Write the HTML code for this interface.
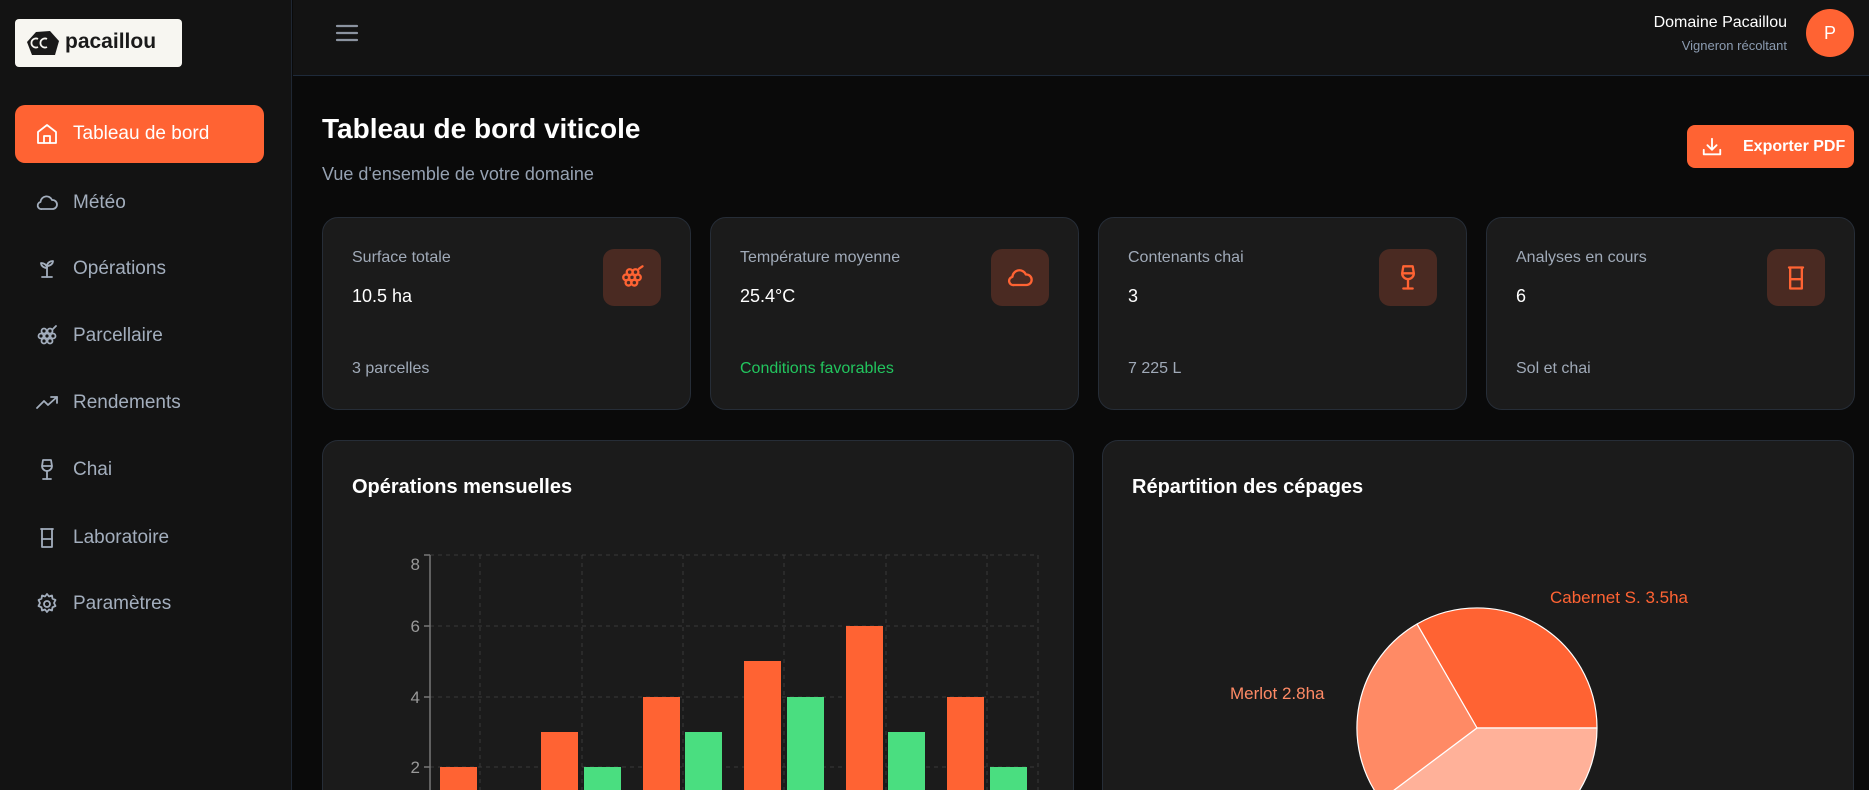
<!DOCTYPE html>
<html style="width:1869px;height:790px;overflow:hidden"><head><meta charset="utf-8"><style>
*{box-sizing:border-box;margin:0;padding:0}
body{width:1869px;height:790px;overflow:hidden;background:#0a0a0a;font-family:"Liberation Sans",sans-serif;position:relative;color:#fff}
.abs{position:absolute}
.side{left:0;top:0;width:292px;height:790px;background:#131313;border-right:1px solid #1f2733}
.logo{left:15px;top:19px;width:167px;height:48px;background:#f7f6f1;border-radius:4px}
.nav{left:15px;width:249px;height:58px;border-radius:10px;display:flex;align-items:center;padding-left:20px;font-size:19px;color:#a3aebd}
.nav svg{width:24px;height:24px;margin-right:14px;fill:none;stroke:#a3aebd;stroke-width:1.8;stroke-linecap:round;stroke-linejoin:round}
.nav.act{background:#ff6333;color:#fff}
.nav.act svg{stroke:#fff}
.hdr{left:293px;top:0;width:1576px;height:76px;background:#131313;border-bottom:1px solid #1e2a3a}
.card{background:#1b1b1b;border:1px solid #262d37;border-radius:16px}
.lbl{font-size:16px;color:#a0aab8}
.val{font-size:18px;color:#fff}
.ib{width:58px;height:57px;background:#4a2a22;border-radius:11px;display:flex;align-items:center;justify-content:center}
.ib svg{width:28px;height:28px;fill:none;stroke:#ff6333;stroke-width:2;stroke-linecap:round;stroke-linejoin:round}
</style></head><body>
<div class="abs side"></div>
<div class="abs logo">
<svg class="abs" style="left:10px;top:10px" width="36" height="28" viewBox="0 0 36 28"><path d="M2 13 L11 3 L25 2 L34 12 L30 26 L7 26 Z" fill="#1a1a1a"/><path d="M13 10 a4.5 4.5 0 1 0 0 8" stroke="#f7f6f1" stroke-width="1.8" fill="none"/><path d="M22 10 a4.5 4.5 0 1 0 0 8" stroke="#f7f6f1" stroke-width="1.8" fill="none"/></svg>
<div class="abs" style="left:50px;top:11px;font-size:21px;font-weight:bold;color:#1a1a1a">pacaillou</div>
</div>
<div class="abs nav act" style="top:105px"><svg viewBox="0 0 24 24"><path d="M3 10 L12 3 L21 10 V21 H3 Z"/><path d="M9 21 V14 H15 V21"/></svg>Tableau de bord</div>
<div class="abs nav" style="top:174px"><svg viewBox="0 0 24 24"><path d="M7 18 H17.5 a4.5 4.5 0 0 0 0-9 h-0.5 a6 6 0 0 0-11.5 2 A3.5 3.5 0 0 0 7 18 Z"/></svg>Météo</div>
<div class="abs nav" style="top:240px"><svg viewBox="0 0 24 24"><path d="M7 20 H17"/><path d="M12 20 V10"/><path d="M12 11 C9 11 6 9 6 6 C9 6 12 8 12 11 Z"/><path d="M12 9 C12 6 15 4 18 4 C18 7 15 9 12 9"/></svg>Opérations</div>
<div class="abs nav" style="top:307px"><svg viewBox="0 0 24 24"><circle cx="9" cy="7" r="2.5"/><circle cx="15" cy="7" r="2.5"/><circle cx="6" cy="12" r="2.5"/><circle cx="12" cy="12" r="2.5"/><circle cx="18" cy="12" r="2.5"/><circle cx="9" cy="17" r="2.5"/><circle cx="15" cy="17" r="2.5"/><path d="M18 5 L21 2"/></svg>Parcellaire</div>
<div class="abs nav" style="top:374px"><svg viewBox="0 0 24 24"><path d="M2 17 L9 10 L13 14 L22 6"/><path d="M16 6 H22 V12"/></svg>Rendements</div>
<div class="abs nav" style="top:441px"><svg viewBox="0 0 24 24"><path d="M8 2 H16 L17 8 A5 5 0 0 1 7 8 Z"/><path d="M7.5 8 H16.5"/><path d="M12 13 V21"/><path d="M8 21 H16"/></svg>Chai</div>
<div class="abs nav" style="top:509px"><svg viewBox="0 0 24 24"><path d="M6 3 H18"/><path d="M7 3 V21 H17 V3"/><path d="M7 13 H17"/></svg>Laboratoire</div>
<div class="abs nav" style="top:575px"><svg viewBox="0 0 24 24"><circle cx="12" cy="12" r="3"/><path d="M12 2 l2 2.5 3-1 .5 3.2 3 1.3-1.5 3 1.5 3-3 1.3-.5 3.2-3-1-2 2.5-2-2.5-3 1-.5-3.2-3-1.3 1.5-3-1.5-3 3-1.3.5-3.2 3 1z"/></svg>Paramètres</div>

<div class="abs hdr"></div>
<svg class="abs" style="left:335px;top:23px" width="24" height="20" viewBox="0 0 24 20"><path d="M2 3H22M2 10H22M2 17H22" stroke="#8b93a0" stroke-width="2.2" stroke-linecap="round"/></svg>
<div class="abs" style="right:82px;top:14px;font-size:16px;color:#fff;text-align:right">Domaine Pacaillou</div>
<div class="abs" style="right:82px;top:38px;font-size:13px;color:#8b9bb0;text-align:right">Vigneron récoltant</div>
<div class="abs" style="left:1806px;top:9px;width:48px;height:48px;border-radius:50%;background:#ff6333;color:#fff;font-size:18px;display:flex;align-items:center;justify-content:center">P</div>

<div class="abs" style="left:322px;top:113px;font-size:28px;font-weight:bold;color:#fff">Tableau de bord viticole</div>
<div class="abs" style="left:322px;top:164px;font-size:18px;color:#96a2b2">Vue d'ensemble de votre domaine</div>
<div class="abs" style="left:1687px;top:125px;width:167px;height:43px;background:#ff6333;border-radius:8px;color:#fff;font-weight:bold;font-size:16px;display:flex;align-items:center;padding-left:14px">
<svg width="22" height="22" viewBox="0 0 24 24" fill="none" stroke="#fff" stroke-width="2" stroke-linecap="round" stroke-linejoin="round" style="margin-right:20px"><path d="M3 15 V20 H21 V15"/><path d="M12 3 V15"/><path d="M7 10 L12 15 L17 10"/></svg>Exporter PDF</div>

<div class="abs card" style="left:322px;top:217px;width:369px;height:193px"></div>
<div class="abs card" style="left:710px;top:217px;width:369px;height:193px"></div>
<div class="abs card" style="left:1098px;top:217px;width:369px;height:193px"></div>
<div class="abs card" style="left:1486px;top:217px;width:369px;height:193px"></div>

<div class="abs lbl" style="left:352px;top:249px">Surface totale</div>
<div class="abs val" style="left:352px;top:286px">10.5 ha</div>
<div class="abs lbl" style="left:352px;top:360px">3 parcelles</div>
<div class="abs ib" style="left:603px;top:249px"><svg viewBox="0 0 24 24"><circle cx="10" cy="7" r="2.5"/><circle cx="15" cy="7" r="2.5"/><circle cx="7" cy="11.5" r="2.5"/><circle cx="12" cy="11.5" r="2.5"/><circle cx="17" cy="11.5" r="2.5"/><circle cx="9" cy="16" r="2.5"/><circle cx="14" cy="16" r="2.5"/><path d="M18 4 L21 2"/></svg></div>

<div class="abs lbl" style="left:740px;top:249px">Température moyenne</div>
<div class="abs val" style="left:740px;top:286px">25.4°C</div>
<div class="abs lbl" style="left:740px;top:360px;color:#22c55e">Conditions favorables</div>
<div class="abs ib" style="left:991px;top:249px"><svg viewBox="0 0 24 24"><path d="M7 18 H17.5 a4.5 4.5 0 0 0 0-9 h-0.5 a6 6 0 0 0-11.5 2 A3.5 3.5 0 0 0 7 18 Z"/></svg></div>

<div class="abs lbl" style="left:1128px;top:249px">Contenants chai</div>
<div class="abs val" style="left:1128px;top:286px">3</div>
<div class="abs lbl" style="left:1128px;top:360px">7 225 L</div>
<div class="abs ib" style="left:1379px;top:249px"><svg viewBox="0 0 24 24"><path d="M8 2 H16 L17 8 A5 5 0 0 1 7 8 Z"/><path d="M7.5 8 H16.5"/><path d="M12 13 V21"/><path d="M8 21 H16"/></svg></div>

<div class="abs lbl" style="left:1516px;top:249px">Analyses en cours</div>
<div class="abs val" style="left:1516px;top:286px">6</div>
<div class="abs lbl" style="left:1516px;top:360px">Sol et chai</div>
<div class="abs ib" style="left:1767px;top:249px"><svg viewBox="0 0 24 24"><path d="M6 3 H18"/><path d="M7 3 V21 H17 V3"/><path d="M7 13 H17"/></svg></div>

<div class="abs card" style="left:322px;top:440px;width:752px;height:350px;border-bottom:none;border-bottom-left-radius:0;border-bottom-right-radius:0"></div>
<div class="abs card" style="left:1102px;top:440px;width:752px;height:350px;border-bottom:none;border-bottom-left-radius:0;border-bottom-right-radius:0"></div>
<div class="abs" style="left:352px;top:476px;font-size:20px;font-weight:bold;color:#fff">Opérations mensuelles</div>
<div class="abs" style="left:1132px;top:476px;font-size:20px;font-weight:bold;color:#fff">Répartition des cépages</div>

<svg class="abs" style="left:0;top:0" width="1869" height="790">
<g stroke="#3a3a3a" stroke-dasharray="4 4" stroke-width="1">
<line x1="430" y1="555" x2="1038" y2="555"/><line x1="430" y1="626" x2="1038" y2="626"/><line x1="430" y1="697" x2="1038" y2="697"/><line x1="430" y1="767" x2="1038" y2="767"/>
<line x1="480" y1="555" x2="480" y2="790"/><line x1="582" y1="555" x2="582" y2="790"/><line x1="683" y1="555" x2="683" y2="790"/><line x1="784" y1="555" x2="784" y2="790"/><line x1="886" y1="555" x2="886" y2="790"/><line x1="987" y1="555" x2="987" y2="790"/><line x1="1038" y1="555" x2="1038" y2="790"/>
</g>
<g stroke="#777" stroke-width="1.5"><line x1="430" y1="555" x2="430" y2="790"/><line x1="424" y1="555" x2="430" y2="555"/><line x1="424" y1="626" x2="430" y2="626"/><line x1="424" y1="697" x2="430" y2="697"/><line x1="424" y1="767" x2="430" y2="767"/></g>
<g fill="#999" font-family="Liberation Sans" font-size="17" text-anchor="end"><text x="420" y="570">8</text><text x="420" y="632">6</text><text x="420" y="703">4</text><text x="420" y="773">2</text></g>
<g fill="#ff6333"><rect x="440" y="767" width="37" height="23"/><rect x="541" y="732" width="37" height="58"/><rect x="643" y="697" width="37" height="93"/><rect x="744" y="661" width="37" height="129"/><rect x="846" y="626" width="37" height="164"/><rect x="947" y="697" width="37" height="93"/></g>
<g fill="#4ade80"><rect x="584" y="767" width="37" height="23"/><rect x="685" y="732" width="37" height="58"/><rect x="787" y="697" width="37" height="93"/><rect x="888" y="732" width="37" height="58"/><rect x="990" y="767" width="37" height="23"/></g>
<g stroke="#fff" stroke-width="1.2" stroke-linejoin="round">
<path d="M1477 728 L1417 624 A120 120 0 0 1 1597 728 Z" fill="#ff6333"/>
<path d="M1477 728 L1381 800 A120 120 0 0 1 1417 624 Z" fill="#ff8a65"/>
<path d="M1477 728 L1597 728 A120 120 0 0 1 1381 800 Z" fill="#ffb199"/>
</g>
<text x="1550" y="603" fill="#ff6333" font-family="Liberation Sans" font-size="17">Cabernet S. 3.5ha</text>
<text x="1230" y="699" fill="#ff8a65" font-family="Liberation Sans" font-size="17">Merlot 2.8ha</text>
</svg>
</body></html>
